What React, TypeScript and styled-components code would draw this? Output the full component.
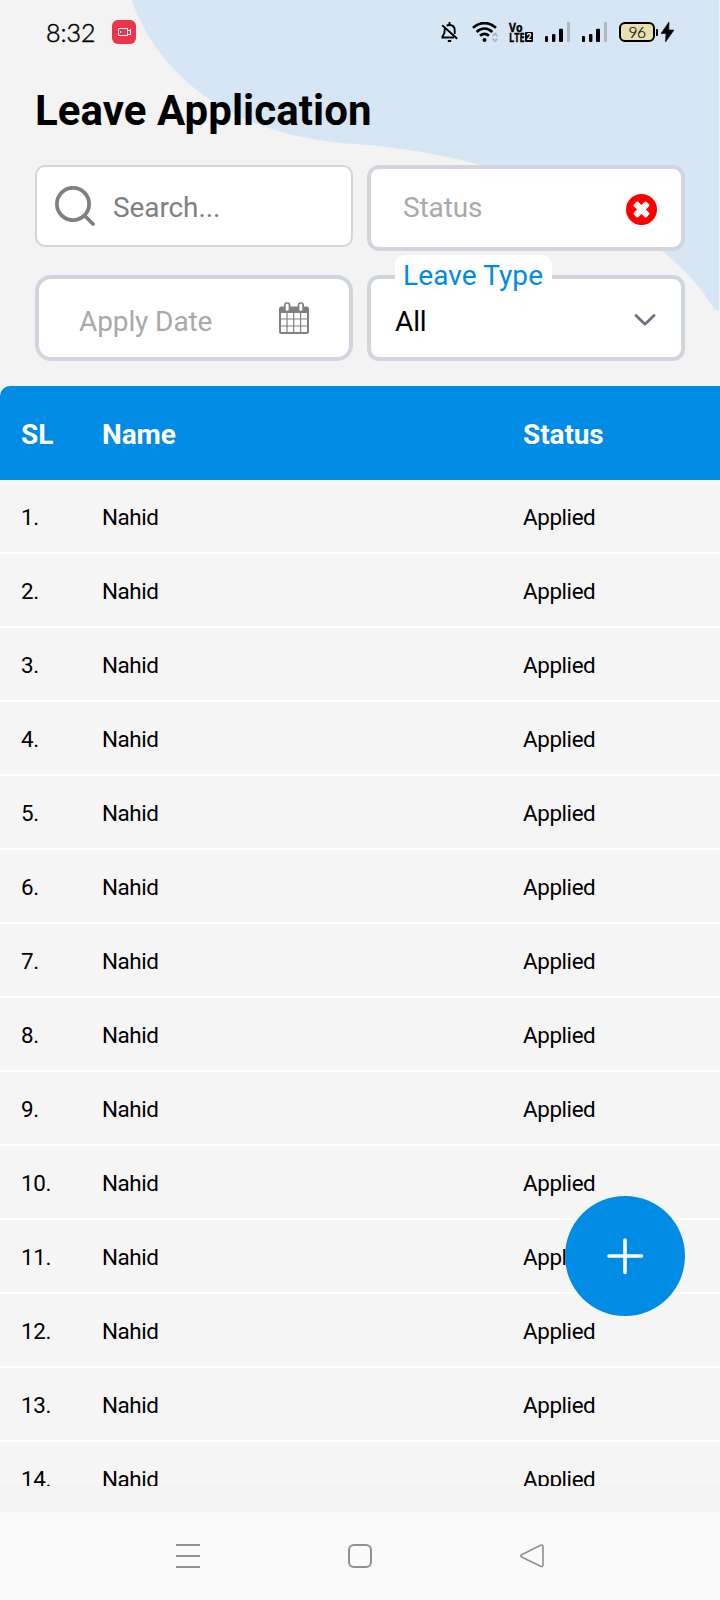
import React from "react";
import styled, { createGlobalStyle } from "styled-components";

const BLUE = "#008be5";

const GlobalStyle = createGlobalStyle`
  *, *::before, *::after { box-sizing: border-box; }
  body { margin: 0; background: #f3f3f3; font-family: Roboto, sans-serif; color: #000; }
`;

const Screen = styled.main`
  position: relative;
  width: 720px;
  height: 1600px;
  display: flex;
  flex-direction: column;
  overflow: hidden;
  background: #f3f3f3;
`;

const Blob = styled.svg`
  position: absolute;
  top: 0;
  left: 0;
`;

const StatusBar = styled.header`
  position: relative;
  height: 64px;
  flex: none;
  display: flex;
  align-items: center;
  padding: 0 46px;
`;

const Clock = styled.time`
  width: 66px;
  font: 300 25px/30px Lato, sans-serif;
  -webkit-text-stroke: 0.5px #000;
  padding-bottom: 1px;
  white-space: nowrap;
`;

const SystemIcons = styled.div`
  margin-left: auto;
  display: flex;
  align-items: center;
`;

const Gap = styled.span<{ $w: number }>`
  flex: none;
  width: ${(p) => p.$w}px;
`;

const VoLte = styled.div`
  width: 25px;
  height: 20px;
  display: flex;
  flex-direction: column;
  font: 700 13px/10px "Open Sans", sans-serif;
`;

const LteLine = styled.div`
  display: flex;
  align-items: center;
  height: 10px;
`;

const Condensed = styled.span<{ $scale: number; $w: number }>`
  display: block;
  flex: none;
  width: ${(p) => p.$w}px;
  height: 10px;
  white-space: nowrap;
  -webkit-text-stroke: 0.4px #000;
  transform: scaleX(${(p) => p.$scale});
  transform-origin: left;
`;

const SimBadge = styled.span`
  flex: none;
  width: 8px;
  height: 10px;
  border-radius: 1px;
  background: #000;
  color: #fff;
  font: 700 9px/10px Roboto, sans-serif;
  text-align: center;
`;

const Battery = styled.div`
  width: 36px;
  height: 20px;
  border: 2px solid #000;
  border-radius: 6px;
  background: #e9dfb0;
  font: 300 15.5px/16px Lato, sans-serif;
  -webkit-text-stroke: 0.2px #000;
  letter-spacing: -0.6px;
  text-align: center;
`;

const BatteryTip = styled.div`
  width: 2px;
  height: 7px;
  margin-left: 0.5px;
  background: #000;
  border-radius: 0 1px 1px 0;
`;

const Title = styled.h1`
  position: relative;
  margin: 0;
  padding: 22px 35px 0;
  height: 101px;
  font-size: 42px;
  line-height: 50px;
  font-weight: 700;
  letter-spacing: 0.05px;
  white-space: nowrap;
`;

const Filters = styled.section`
  position: relative;
  display: grid;
  grid-template-columns: 318px 318px;
  grid-template-rows: 86px 86px;
  gap: 24px 14px;
  padding: 0 35px;
  margin-bottom: 25px;
  align-items: start;
`;

const Field = styled.div<{ $thin?: boolean; $radius?: number; $pad: string }>`
  position: relative;
  display: flex;
  align-items: center;
  height: ${(p) => (p.$thin ? 82 : 86)}px;
  border: ${(p) => (p.$thin ? 2 : 4)}px solid #d1d5dd;
  border-radius: ${(p) => p.$radius ?? 12}px;
  background: #fff;
  padding: ${(p) => p.$pad};
`;

const FieldText = styled.span<{ $color: string; $drop?: number }>`
  flex: 1;
  padding-top: ${(p) => (p.$drop ?? 0) * 2}px;
  font-size: 28px;
  line-height: 34px;
  letter-spacing: -0.1px;
  color: ${(p) => p.$color};
  white-space: nowrap;
`;

const FloatingLabel = styled.label`
  position: absolute;
  top: -24px;
  left: 24px;
  width: 157px;
  height: 38px;
  padding-left: 8px;
  border-radius: 10px 10px 0 0;
  background: #fff;
  color: ${BLUE};
  font-size: 28px;
  line-height: 42px;
  letter-spacing: 0.1px;
  white-space: nowrap;
`;

const Table = styled.section`
  position: relative;
  height: 1100px;
  flex: none;
  overflow: hidden;
  border-top-left-radius: 10px;
  background: #f5f5f5;
`;

const Row = styled.div`
  display: grid;
  grid-template-columns: 81px 421px 1fr;
  align-items: center;
  height: 74px;
  padding: 2px 0 0 21px;
  border-bottom: 2px solid #fff;
  font-size: 22.4px;
  letter-spacing: -0.4px;
  white-space: nowrap;
`;

const HeadRow = styled(Row)`
  height: 94px;
  padding-top: 3px;
  border-bottom: 0;
  background: ${BLUE};
  color: #fff;
  font-size: 28px;
  letter-spacing: -0.1px;
  font-weight: 700;
`;

const AddButton = styled.button`
  position: absolute;
  left: 565px;
  top: 1196px;
  width: 120px;
  height: 120px;
  display: grid;
  place-items: center;
  padding: 0;
  border: 0;
  border-radius: 50%;
  background: ${BLUE};
`;

const NavBar = styled.nav`
  margin-top: auto;
  height: 88px;
  display: flex;
  justify-content: space-between;
  padding: 32px 175px 0 176px;
  background: #fafafa;
`;

const SignalBars = () => (
  <svg width="26" height="20" viewBox="0 0 26 20">
    <rect x="0" y="14" width="3" height="6" rx="1" />
    <rect x="7" y="12" width="3.4" height="8" rx="1" />
    <rect x="14" y="6.7" width="4" height="13.3" rx="1" />
    <rect x="22" y="0" width="3" height="20" rx="0.5" fill="#adb9c4" />
  </svg>
);

const BellOff = () => (
  <svg width="17" height="20" viewBox="0 0 17 20" fill="none" stroke="#000" strokeWidth="1.9">
    <path d="M1.2 3.200 16.200 16.800" />
    <path d="M5.6 3.7C6.5 3.2 7.4 3 8.5 3c3.4 0 5.2 2.3 5.2 5.5V12" />
    <path d="M4 6.6C3.5 8 3.6 9.5 3.3 11.3L1.4 14.7V15.5h11.500" />
    <path d="M8.5 0v3M6.8 19h3.4" />
  </svg>
);

const Wifi = () => (
  <svg width="27" height="20" viewBox="0 0 27 20" fill="none">
    <g stroke="#000" strokeWidth="2.7">
      <path d="M.9 5.7C8-.5 16.900-.5 24 5.700" />
      <path d="M4.600 9.900C9.500 5.600 15.400 5.600 20.300 9.900" />
      <path d="M8 13.800C10.900 11.300 14 11.300 16.900 13.800" />
    </g>
    <circle cx="12.500" cy="18" r="2" fill="#000" />
    <path d="M20.500 14.200 23 11.500l2.500 2.700M20.500 16.600 23 19.200l2.500-2.600" stroke="#adb9c4" strokeWidth="1.900" />
  </svg>
);

const Recorder = () => (
  <svg width="24" height="24" viewBox="0 0 24 24">
    <rect width="24" height="24" rx="6" fill="#ee344b" />
    <g fill="none" stroke="#fff" strokeWidth="1">
      <rect x="6.500" y="8.500" width="9" height="7" />
      <path d="M8.500 11v2M16 10.500h2.500M18.500 9v6M16 14.500h2.500" />
    </g>
  </svg>
);

const SearchIcon = () => (
  <svg width="40" height="40" viewBox="0 0 40 40" fill="none" stroke="#808080">
    <circle cx="18" cy="18" r="16.100" strokeWidth="3.800" />
    <path d="m30 30 8 8" strokeWidth="3.800" strokeLinecap="round" />
  </svg>
);

const ClearIcon = () => (
  <svg width="31" height="33" viewBox="0 -2 31 33">
    <circle cx="15.500" cy="15.500" r="15.500" fill="#f00" />
    <g fill="#fff" transform="translate(15.500 15.500)">
      <rect x="-9" y="-3.100" width="18" height="6.200" rx="1.300" transform="rotate(45)" />
      <rect x="-9" y="-3.100" width="18" height="6.200" rx="1.300" transform="rotate(-45)" />
    </g>
  </svg>
);

const CalendarIcon = () => (
  <svg width="30" height="32" viewBox="0 0 30 32">
    <rect x="1" y="5.500" width="28" height="25.500" rx="1.500" fill="#fff" stroke="#808080" strokeWidth="2" />
    <path d="M1 5h28v6H1z" fill="#808080" />
    <path d="M8 11v20M14.700 11v20M21.600 11v20M1 17h28M1 24h28" stroke="#808080" strokeWidth="1.200" />
    <rect x="5.900" y="1" width="4.600" height="8.600" rx="1.900" fill="#fff" stroke="#808080" strokeWidth="1.700" />
    <rect x="19.500" y="1" width="4.600" height="8.600" rx="1.900" fill="#fff" stroke="#808080" strokeWidth="1.700" />
  </svg>
);

const Chevron = () => (
  <svg width="22" height="15" viewBox="0 -3 22 15" fill="none" stroke="#6b7280" strokeWidth="2.700" strokeLinecap="round" strokeLinejoin="round">
    <path d="m2 1.500 9 8.800 9-8.800" />
  </svg>
);

const rows = Array.from({ length: 14 }, (_, i) => ({ sl: i + 1, name: "Nahid", status: "Applied" }));

export default function App() {
  return (
    <>
      <GlobalStyle />
      <Screen>
        <Blob width="720" height="310" viewBox="0 0 720 310" fill="#d7e6f5">
          <path d="M131.500 0C148 47 180 80 212 101C260 132 310 141 360 144.500C400 147.500 440 154 480 165C545 182 610 210 662 251C684 269 700 286 715 310H719V0Z" />
        </Blob>
        <StatusBar>
          <Clock>8:32</Clock>
          <Recorder />
          <SystemIcons>
            <BellOff />
            <Gap $w={14} />
            <Wifi />
            <Gap $w={10} />
            <VoLte>
              <Condensed $scale={0.82} $w={20}>Vo</Condensed>
              <LteLine>
                <Condensed $scale={0.7} $w={16}>LTE</Condensed>
                <SimBadge>2</SimBadge>
              </LteLine>
            </VoLte>
            <Gap $w={11} />
            <SignalBars />
            <Gap $w={11} />
            <SignalBars />
            <Gap $w={11} />
            <Battery>96</Battery>
            <BatteryTip />
            <Gap $w={3.5} />
            <svg width="13" height="20" viewBox="0 0 13 20">
              <path d="M8 0 0 11.500h5L4.500 20l8.500-12H7.800Z" stroke="#000" strokeWidth="0.6" />
            </svg>
          </SystemIcons>
        </StatusBar>
        <Title>Leave Application</Title>
        <Filters>
          <Field $thin $radius={10} $pad="0 20px 0 18px">
            <SearchIcon />
            <Gap $w={18} />
            <FieldText $color="#808080" $drop={2}>Search...</FieldText>
          </Field>
          <Field $pad="0 24px 0 32px">
            <FieldText $color="#a9a9a9">Status</FieldText>
            <ClearIcon />
          </Field>
          <Field $radius={16} $pad="0 40px 0 40px">
            <FieldText $color="#a9a9a9" $drop={4}>Apply Date</FieldText>
            <CalendarIcon />
          </Field>
          <Field $pad="0 25px 0 24px">
            <FloatingLabel>Leave Type</FloatingLabel>
            <FieldText $color="#000" $drop={4}>All</FieldText>
            <Chevron />
          </Field>
        </Filters>
        <Table>
          <HeadRow>
            <span>SL</span>
            <span>Name</span>
            <span>Status</span>
          </HeadRow>
          {rows.map((r) => (
            <Row key={r.sl}>
              <span>{r.sl}.</span>
              <span>{r.name}</span>
              <span>{r.status}</span>
            </Row>
          ))}
        </Table>
        <NavBar>
          <svg width="24" height="24" viewBox="0 0 24 24" stroke="#909090" strokeWidth="2">
            <path d="M0 1h24M0 12h24M0 23h24" />
          </svg>
          <svg width="24" height="24" viewBox="0 0 24 24" fill="none" stroke="#909090" strokeWidth="2">
            <rect x="1" y="1" width="22" height="22" rx="5" />
          </svg>
          <svg width="25" height="24" viewBox="0 0 25 24" fill="none" stroke="#909090" strokeWidth="1.600" strokeLinejoin="round">
            <path d="M1.600 10.700 20.600 1.200Q23 .3 23 3V20.500Q23 23.200 20.600 22.300L1.600 13Q.1 11.800 1.600 10.700Z" />
          </svg>
        </NavBar>
        <AddButton aria-label="Add">
          <svg width="38" height="38" viewBox="0 0 38 38" stroke="#fff" strokeWidth="3.600" strokeLinecap="round">
            <path d="M19 3v32.500M3 19h32.500" />
          </svg>
        </AddButton>
      </Screen>
    </>
  );
}
